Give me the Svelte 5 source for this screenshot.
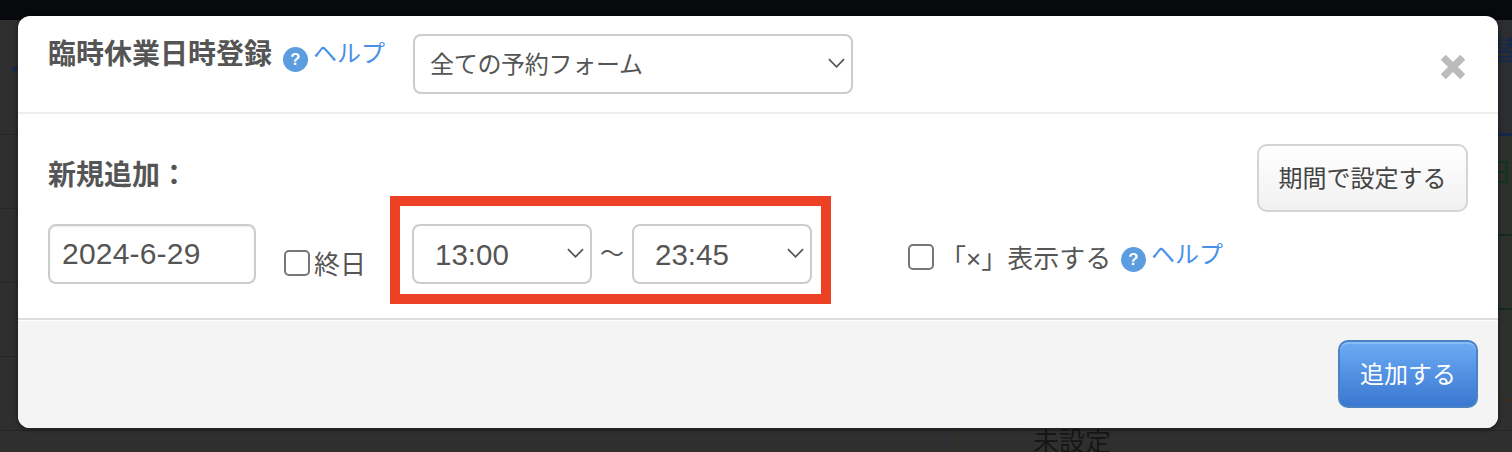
<script lang="ts">
	let form = $state("全ての予約フォーム");
	let date = $state("2024-6-29");
	let from = $state("13:00");
	let to = $state("23:45");
	let allDay = $state(false);
	let showCross = $state(false);

	const times = ["13:00", "23:45"];
</script>

<div class="page">
	<div class="topbar"></div>
	<div class="backdrop">
		<div class="row first"><span class="caret"></span></div>
		<div class="row"></div>
		<div class="row"></div>
		<div class="row"></div>
		<div class="row"></div>
	</div>
	<div class="strip">
		<div class="seg blue"><span>替</span></div>
		<div class="seg green"><span>日</span></div>
		<div class="seg"></div>
		<div class="seg last"></div>
	</div>
	<div class="behind-cell"></div>
	<span class="behind-text">未設定</span>

	<div class="modal">
		<header>
			<h3>臨時休業日時登録</h3>
			<span class="help first-help"><i>?</i><a href="#help">ヘルプ</a></span>
			<div class="select form-select">
				<select bind:value={form}>
					<option>全ての予約フォーム</option>
				</select>
				<svg viewBox="0 0 18 10"><path d="M1 1l8 8 8-8" /></svg>
			</div>
			<button class="close" aria-label="close">
				<svg viewBox="0 0 24 24"><path d="M3 3l18 18M21 3L3 21" /></svg>
			</button>
		</header>

		<div class="body">
			<div class="top-row">
				<h4>新規追加：</h4>
				<button class="btn">期間で設定する</button>
			</div>
			<div class="fields">
				<input class="date" type="text" bind:value={date} />
				<label class="all-day"><input type="checkbox" bind:checked={allDay} />終日</label>
				<div class="highlight">
					<div class="select time">
						<select bind:value={from}>
							{#each times as t}<option>{t}</option>{/each}
						</select>
						<svg viewBox="0 0 18 10"><path d="M1 1l8 8 8-8" /></svg>
					</div>
					<span class="tilde">〜</span>
					<div class="select time">
						<select bind:value={to}>
							{#each times as t}<option>{t}</option>{/each}
						</select>
						<svg viewBox="0 0 18 10"><path d="M1 1l8 8 8-8" /></svg>
					</div>
				</div>
				<label class="cross"><input type="checkbox" bind:checked={showCross} /><span class="cross-text">「×」表示する</span></label>
				<span class="help"><i>?</i><a href="#help">ヘルプ</a></span>
			</div>
		</div>

		<footer>
			<button class="btn primary">追加する</button>
		</footer>
	</div>
</div>

<style>
	:global(body) {
		margin: 0;
		background: #2f2f2f;
	}
	.page {
		position: relative;
		width: 1512px;
		height: 452px;
		overflow: hidden;
		font-family: "Liberation Sans", "Noto Sans CJK JP", sans-serif;
		color: #555;
	}
	.topbar {
		height: 20px;
		background: #07090c;
	}
	.row {
		height: 73px;
		border-bottom: 1px solid #262626;
		position: relative;
	}
	.row.first {
		height: 114px;
	}
	.caret {
		position: absolute;
		left: 11px;
		top: 47px;
		border: 4px solid transparent;
		border-top: 6px solid #142a4c;
		border-bottom: 0;
	}
	.strip {
		position: absolute;
		left: 1490px;
		top: 20px;
		width: 22px;
		overflow: hidden;
	}
	.seg {
		height: 74px;
		box-sizing: border-box;
		border-bottom: 2px solid #18291d;
		background: #2d302d;
		font-size: 28px;
		line-height: 28px;
	}
	.seg.blue {
		height: 116px;
		border-bottom: 3px solid #15284a;
		background: #2c2d31;
		color: #142a4c;
		padding-top: 18px;
	}
	.seg.green {
		height: 100px;
		color: #12331d;
		margin-left: -6px;
		padding-top: 24px;
	}
	.seg.last {
		height: 91px;
		border-bottom-color: #3a2c1c;
	}
	.behind-cell {
		position: absolute;
		left: 957px;
		top: 420px;
		width: 58px;
		height: 32px;
		border-left: 1px solid #3c2f1c;
		border-right: 1px solid #3c2f1c;
	}
	.behind-text {
		position: absolute;
		left: 1033px;
		top: 426px;
		font-size: 26px;
		line-height: 32px;
		color: #161616;
		white-space: nowrap;
	}
	.modal {
		position: absolute;
		left: 18px;
		top: 16px;
		width: 1480px;
		height: 412px;
		background: #fff;
		border-radius: 12px;
		overflow: hidden;
		display: flex;
		flex-direction: column;
		box-shadow: 0 1px 5px rgba(0, 0, 0, 0.5);
	}
	header {
		height: 96px;
		border-bottom: 2px solid #eee;
		display: flex;
		align-items: flex-start;
		padding-left: 30px;
		flex-shrink: 0;
	}
	h3,
	h4 {
		margin: 0;
		font-size: 28px;
		font-weight: 700;
		line-height: 34px;
		color: #555;
	}
	h3 {
		margin-top: 22px;
		width: 224px;
		white-space: nowrap;
	}
	.help {
		display: inline-flex;
		align-items: flex-start;
		white-space: nowrap;
	}
	.help i {
		width: 25px;
		height: 25px;
		border-radius: 50%;
		background: #5c9de0;
		color: #fff;
		font-style: normal;
		font-weight: 700;
		font-size: 17px;
		line-height: 25px;
		text-align: center;
		margin-top: 7px;
		margin-right: 5px;
		filter: blur(0.4px);
	}
	.help a {
		color: #4a90e8;
		font-size: 24px;
		line-height: 28px;
		text-decoration: none;
	}
	.first-help {
		margin-left: 11px;
		margin-top: 24px;
	}
	.select {
		position: relative;
		height: 60px;
		flex-shrink: 0;
	}
	.select select {
		appearance: none;
		width: 100%;
		height: 100%;
		box-sizing: border-box;
		border: 2px solid #ccc;
		border-radius: 8px;
		background: #fff;
		font-family: inherit;
		color: #555;
		font-size: 24px;
		letter-spacing: -0.3px;
		padding: 0 0 0 15px;
	}
	.select svg {
		position: absolute;
		right: 8px;
		top: 24px;
		width: 17px;
		height: 10px;
		fill: none;
		stroke: #555;
		stroke-width: 1.8;
		pointer-events: none;
	}
	.form-select {
		width: 440px;
		margin: 18px 0 0 28px;
	}
	.close {
		margin: 38px 32px 0 auto;
		width: 26px;
		height: 26px;
		padding: 0;
		border: 0;
		background: none;
	}
	.close svg {
		display: block;
		fill: none;
		stroke: #bbb;
		stroke-width: 6.5;
	}
	.body {
		flex: 1;
		padding: 30px 30px 0;
	}
	.top-row {
		height: 52px;
		display: flex;
		justify-content: space-between;
		align-items: flex-start;
	}
	h4 {
		margin-top: 15px;
	}
	.btn {
		height: 68px;
		width: 211px;
		box-sizing: border-box;
		border: 2px solid #d4d4d4;
		border-radius: 10px;
		background: linear-gradient(#fff, #f1f1f1);
		font-family: inherit;
		font-size: 24px;
		color: #444;
		padding: 0 0 4px;
		flex-shrink: 0;
	}
	.fields {
		height: 108px;
		display: flex;
		align-items: flex-start;
	}
	.date {
		width: 208px;
		height: 60px;
		box-sizing: border-box;
		margin: 28px 0 0;
		border: 2px solid #ccc;
		border-radius: 8px;
		padding: 0 0 1px 12px;
		font-family: inherit;
		font-size: 30px;
		letter-spacing: 0.2px;
		color: #555;
		box-shadow: inset 0 1px 2px rgba(0, 0, 0, 0.08);
	}
	label {
		display: flex;
		align-items: center;
		font-size: 26px;
		white-space: nowrap;
	}
	label input {
		appearance: none;
		width: 26px;
		height: 26px;
		flex-shrink: 0;
		box-sizing: border-box;
		margin: 0;
		border: 2px solid #777;
		border-radius: 5px;
		background: #fff;
	}
	.all-day {
		width: 83px;
		margin: 48px 0 0 28px;
		gap: 4px;
		flex-shrink: 0;
	}
	.highlight {
		width: 441px;
		height: 108px;
		box-sizing: border-box;
		margin-left: 23px;
		border: 10px solid #ec4125;
		padding: 18px 9px 0 12px;
		display: flex;
		flex-shrink: 0;
	}
	.time {
		width: 180px;
	}
	.time select {
		font-size: 29.5px;
		letter-spacing: 0;
		padding-left: 21px;
	}
	.tilde {
		width: 40px;
		text-align: center;
		font-size: 24px;
		line-height: 60px;
	}
	.cross {
		margin: 42px 0 0 77px;
		width: 207px;
	}
	.cross-text {
		margin-left: 6px;
	}
	.fields > .help {
		margin-top: 45px;
		margin-left: 6px;
	}
	.fields > .help i {
		margin-top: 6px;
	}
	footer {
		height: 110px;
		box-sizing: border-box;
		flex-shrink: 0;
		border-top: 2px solid #ddd;
		box-shadow: inset 0 1px 0 #fff;
		background: #f4f4f4;
		display: flex;
		justify-content: flex-end;
		align-items: flex-start;
		padding: 20px 20px 0 0;
	}
	.btn.primary {
		width: 140px;
		border-color: #4a83c4;
		background: linear-gradient(#6cacf4, #3a77d1);
		box-shadow: inset 0 2px 0 rgba(255, 255, 255, 0.2);
		color: #fff;
	}
</style>
